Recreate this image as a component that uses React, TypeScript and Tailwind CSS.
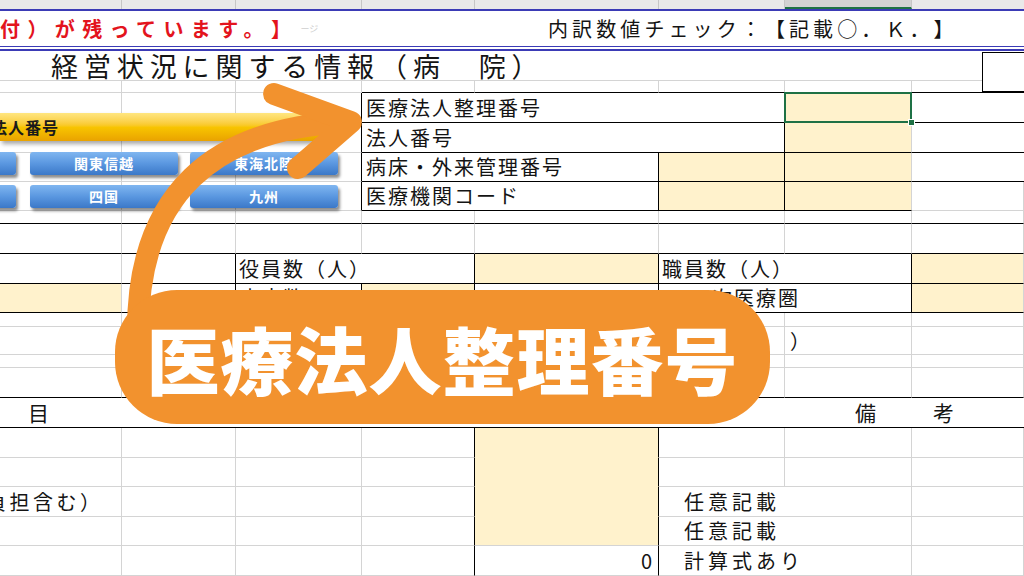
import React from "react";

const G = "grid grid-cols-[122px_114px_126px_113px_184px_126px_127px_112px]";
const B = "border-r border-b border-[#d4d4d4]";
const LBL = "flex items-center whitespace-nowrap overflow-hidden text-[20px] tracking-[2px] leading-none";
const CREAM = "bg-[#fff2cc]";

function Btn({ left, top, w, label }: { left: number; top: number; w: number; label: string }) {
  return (
    <div
      className="absolute flex items-center justify-center rounded-[3px] bg-linear-to-b from-[#80b6f0] via-[#5a97e0] to-[#3b78c8] text-white text-[14px] font-bold tracking-[1px] shadow-[2px_3px_3px_rgba(0,0,0,0.45)] h-[23px]"
      style={{ left, top, width: w }}
    >
      {label}
    </div>
  );
}

export default function App() {
  return (
    <div className="relative w-[1024px] h-[576px] overflow-hidden bg-white font-['Noto_Sans_CJK_JP',sans-serif] text-[#141414] [text-spacing-trim:space-all]">
      {/* column header strip */}
      <div className={`${G} h-[9px] bg-[#e9e9e9]`}>
        <div className="border-r border-[#c6c6c6]" />
        <div className="border-r border-[#c6c6c6]" />
        <div className="border-r border-[#c6c6c6]" />
        <div className="border-r border-[#c6c6c6]" />
        <div className="border-r border-[#c6c6c6]" />
        <div className="border-r border-[#c6c6c6]" />
        <div className="bg-[#d3d3d3] border-r border-r-[#c6c6c6] border-b-2 border-b-[#1f7244]" />
        <div />
      </div>
      <div className="h-[2px] bg-[#3b3bb6]" />

      {/* row A */}
      <div className={`${G} h-[35px]`}>
        <div className="col-span-4 flex items-center whitespace-nowrap">
          <span className="text-[20px] font-bold tracking-[7.4px] text-[#e3141d] leading-none">付）が残っています。】</span>
          <span className="ml-[2px] text-[9px] text-[#cfcfcf] leading-none">ージ</span>
        </div>
        <div className="col-span-4 flex items-center pl-[73px] whitespace-nowrap">
          <span className="text-[20px] tracking-[4.1px] leading-none">内訳数値チェック：【記載○．Ｋ．】</span>
        </div>
      </div>
      <div className="h-[5px] border-t border-b-2 border-[#3b3bb6]" />

      {/* title row */}
      <div className={`${G} h-[29px]`}>
        <div className="col-span-7 border-b border-[#d4d4d4] pl-[51px] text-[27px] leading-[29px] tracking-[5.9px] whitespace-nowrap">
          経営状況に関する情報（病　院）
        </div>
        <div className="flex">
          <div className="flex-1 border-b border-[#d4d4d4]" />
          <div className="w-[42px] border-l border-t border-black mt-[1px]" />
        </div>
      </div>
      {/* row C */}
      <div className={`${G} h-[13px]`}>
        <div className={B} />
        <div className={B} />
        <div className={B} />
        <div className={`${B} border-b-black`} />
        <div className={`${B} border-b-black`} />
        <div className={`${B} border-b-black`} />
        <div className={`${B} border-b-black`} />
        <div className="flex">
          <div className="flex-1 border-b border-black" />
          <div className="w-[42px] border-l border-b-2 border-black" />
        </div>
      </div>

      {/* table rows */}
      <div className={`${G} h-[30px]`}>
        <div className={B} />
        <div className={B} />
        <div className={`${B} border-r-black`} />
        <div className={`col-span-3 ${B} border-r-black border-b-black pl-[4px] ${LBL}`}>医療法人整理番号</div>
        <div className={`relative ${B} border-r-black border-b-black ${CREAM}`}>
          <div className="absolute -left-[1px] -top-[1px] -right-[1px] -bottom-[1px] border-2 border-[#1e7145]" />
          <div className="absolute -right-[4px] -bottom-[4px] w-[7px] h-[7px] bg-[#1e7145] border border-white z-10" />
        </div>
        <div className="border-b border-black" />
      </div>
      <div className={`${G} h-[30px]`}>
        <div className={B} />
        <div className={B} />
        <div className={`${B} border-r-black`} />
        <div className={`col-span-3 ${B} border-r-black border-b-black pl-[4px] ${LBL}`}>法人番号</div>
        <div className={`${B} border-b-black ${CREAM}`} />
        <div className="border-b border-black" />
      </div>
      <div className={`${G} h-[29px]`}>
        <div className={B} />
        <div className={B} />
        <div className={`${B} border-r-black`} />
        <div className={`col-span-2 ${B} border-r-black border-b-black pl-[4px] ${LBL}`}>病床・外来管理番号</div>
        <div className={`${B} border-r-black border-b-black ${CREAM}`} />
        <div className={`${B} border-b-black ${CREAM}`} />
        <div className="border-b border-black" />
      </div>
      <div className={`${G} h-[29px]`}>
        <div className={B} />
        <div className={B} />
        <div className={`${B} border-r-black`} />
        <div className={`col-span-2 ${B} border-r-black border-b-black pl-[4px] ${LBL}`}>医療機関コード</div>
        <div className={`${B} border-r-black border-b-black ${CREAM}`} />
        <div className={`${B} border-b-black ${CREAM}`} />
        <div className={B} />
      </div>

      {/* spacer rows */}
      <div className={`${G} h-[13px]`}>
        <div className={`${B} border-b-black`} />
        <div className={`${B} border-b-black`} />
        <div className={`${B} border-b-black`} />
        <div className={`${B} border-b-black`} />
        <div className={`${B} border-b-black`} />
        <div className={`${B} border-b-black`} />
        <div className={`${B} border-b-black`} />
        <div className={`${B} border-b-black`} />
      </div>
      <div className={`${G} h-[30px]`}>
        <div className={`${B} border-b-black`} />
        <div className={`${B} border-b-black`} />
        <div className={`${B} border-b-black`} />
        <div className={`${B} border-b-black`} />
        <div className={`${B} border-b-black`} />
        <div className={`${B} border-b-black`} />
        <div className={`${B} border-b-black`} />
        <div className={`${B} border-b-black`} />
      </div>
      <div className={`${G} h-[30px]`}>
        <div className={`${B} border-b-black`} />
        <div className={`${B} border-r-black border-b-black`} />
        <div className={`col-span-2 ${B} border-r-black border-b-black pl-[3px] ${LBL}`}>役員数（人）</div>
        <div className={`${B} border-r-black border-b-black ${CREAM}`} />
        <div className={`col-span-2 ${B} border-r-black border-b-black pl-[3px] ${LBL}`}>職員数（人）</div>
        <div className={`${B} border-b-black ${CREAM}`} />
      </div>
      <div className={`${G} h-[29px]`}>
        <div className={`${B} border-b-black ${CREAM}`} />
        <div className={`${B} border-r-black border-b-black`} />
        <div className={`${B} border-r-black border-b-black pl-[3px] ${LBL}`}>病床数</div>
        <div className={`${B} border-r-black border-b-black ${CREAM}`} />
        <div className={`${B} border-r-black border-b-black`} />
        <div className={`col-span-2 ${B} border-r-black border-b-black pl-[31px] ${LBL}`}>二次医療圏</div>
        <div className={`${B} border-b-black ${CREAM}`} />
      </div>

      {/* blank rows */}
      {[14, 28, 13, 30].map((h, i) => (
        <div key={i} className={`${G}`} style={{ height: h }}>
          <div className={`${B} ${i === 3 ? "border-b-black" : ""}`} />
          <div className={`${B} ${i === 3 ? "border-b-black" : ""}`} />
          <div className={`${B} ${i === 3 ? "border-b-black" : ""}`} />
          <div className={`${B} ${i === 3 ? "border-b-black" : ""}`} />
          <div className={`col-span-2 ${B} ${i === 3 ? "border-b-black" : ""}`} />
          <div className={`${B} ${i === 3 ? "border-b-black" : ""} pl-[5px] flex items-center text-[20px] leading-none`}>
            {i === 1 ? "）" : ""}
          </div>
          <div className={`${B} ${i === 3 ? "border-b-black" : ""}`} />
        </div>
      ))}

      {/* heading row */}
      <div className={`${G} h-[30px]`}>
        <div className="col-span-4 border-b border-black flex items-center pl-[28px] text-[21px] leading-none">目</div>
        <div className="border-b border-black flex items-center pl-[112px] text-[21px] leading-none">額</div>
        <div className="col-span-3 border-b border-black flex items-center pl-[196px] text-[21px] leading-none">
          <span>備</span>
          <span className="ml-[57px]">考</span>
        </div>
      </div>

      {/* lower rows */}
      {[30, 29, 30, 29, 30].map((h, i) => (
        <div key={i} className={G} style={{ height: h }}>
          <div className={`${B} overflow-hidden whitespace-nowrap flex items-center text-[20px] tracking-[3.5px] leading-none`}>
            {i === 2 ? <span className="ml-[-14px]">負担含む）</span> : null}
          </div>
          <div className={B} />
          <div className={B} />
          <div className={`${B} border-r-black`} />
          {i < 3 ? (
            <div className={`${B} border-r-black border-b-[#fff2cc] ${CREAM}`} />
          ) : i === 3 ? (
            <div className={`${B} border-r-black ${CREAM}`} />
          ) : (
            <div className={`${B} border-r-black flex items-center justify-end pr-[6px] text-[20px] leading-none`}>0</div>
          )}
          {i < 2 ? (
            <>
              <div className={B} />
              <div className={B} />
            </>
          ) : (
            <div className={`col-span-2 ${B} pl-[25px] ${LBL} tracking-[4px]`}>
              {i === 4 ? "計算式あり" : "任意記載"}
            </div>
          )}
          <div className={B} />
        </div>
      ))}

      {/* Excel shapes: yellow bar + region buttons */}
      <div className="absolute left-0 top-[113px] w-[322px] h-[28px] flex items-center rounded-r-[3px] bg-linear-to-b from-[#ffe680] via-[#f8c500] to-[#e9a200] shadow-[2px_3px_4px_rgba(0,0,0,0.35)] overflow-hidden">
        <span className="ml-[-9px] text-[16px] font-bold leading-none text-[#1a1a1a] tracking-[1px]">法人番号</span>
      </div>
      <Btn left={-140} top={152} w={156} label="" />
      <Btn left={30} top={152} w={148} label="関東信越" />
      <Btn left={190} top={152} w={148} label="東海北陸" />
      <Btn left={-140} top={185} w={156} label="" />
      <Btn left={30} top={185} w={148} label="四国" />
      <Btn left={190} top={185} w={148} label="九州" />

      {/* orange arrow */}
      <svg className="absolute left-0 top-0 pointer-events-none" width="1024" height="576" viewBox="0 0 1024 576">
        <path
          d="M 138 330 C 138 195, 212 128, 348 122"
          fill="none"
          stroke="#f2922e"
          strokeWidth="22"
          strokeLinecap="round"
        />
        <path
          d="M 274 94 L 351 122 L 298 168"
          fill="none"
          stroke="#f2922e"
          strokeWidth="22"
          strokeLinecap="round"
          strokeLinejoin="round"
        />
      </svg>

      {/* orange pill */}
      <div className="absolute left-[115px] top-[290px] w-[655px] h-[134px] rounded-[62px] bg-[#f2922e] flex items-center justify-center">
        <span className="text-white font-black text-[73px] leading-none tracking-[1px] whitespace-nowrap">医療法人整理番号</span>
      </div>
    </div>
  );
}
